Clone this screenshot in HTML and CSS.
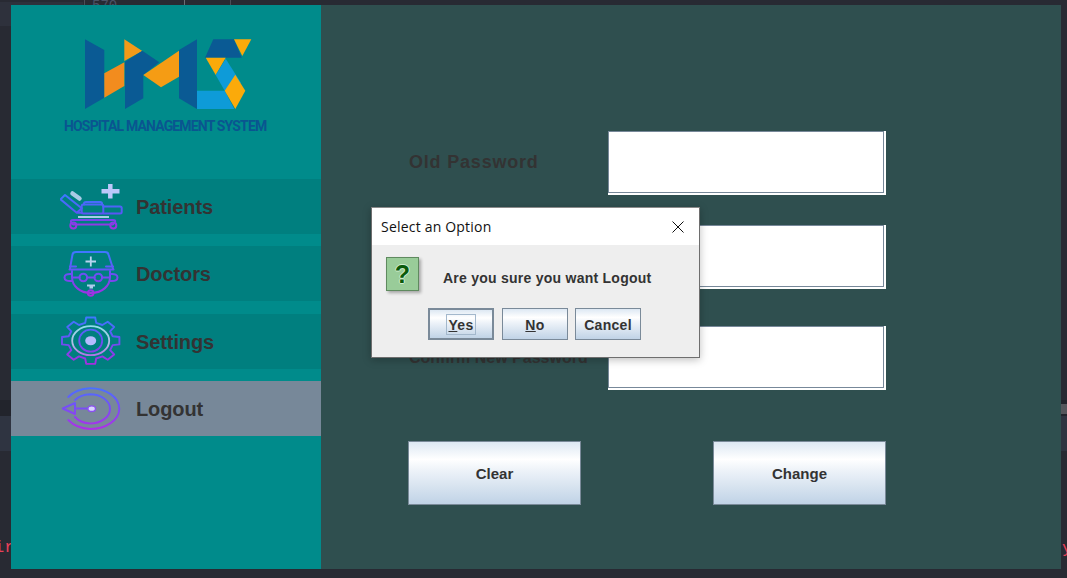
FILE: index.html
```html
<!DOCTYPE html>
<html lang="en">
<head>
<meta charset="utf-8">
<title>Hospital Management System</title>
<link rel="stylesheet" href="styles.css">
</head>
<body>
<div class="backdrop" aria-hidden="true">
  <div class="bd bd-tab"></div>
  <div class="bd bd-vline bd-v1"></div>
  <div class="bd bd-vline bd-v2"></div>
  <div class="bd bd-vline bd-v3"></div>
  <span class="bd bd-num">570</span>
  <div class="bd bd-dark"></div>
  <div class="bd bd-band"></div>
  <div class="bd bd-scroll"></div>
  <span class="bd bd-err bd-err-l">ir</span>
  <span class="bd bd-err bd-err-r">y</span>
</div>

<div class="window">
  <aside class="sidebar">
    <div class="brand">
      <svg class="logo" viewBox="85 39 167 70" width="167" height="70">
        <polygon fill="#0a5a94" points="85,39.3 104.3,50 104.3,97.7 85,109"/>
        <polygon fill="#f28c1e" points="104.3,73.3 124.3,62.3 124.3,86 104.3,97.7"/>
        <polygon fill="#f39a18" points="124.3,39.3 142.3,51 124.3,61"/>
        <polygon fill="#0a5a94" points="125,61.7 142.3,50.7 159.3,62.3 143.3,75 143.3,98.3 125,109"/>
        <polygon fill="#f59c14" points="143.3,75 179,50.7 179,76.7 161,87.3"/>
        <polygon fill="#0a5a94" points="179,50 197,39.3 197,109 179,98.3"/>
        <polygon fill="#0a5a94" points="213.3,39.3 234,39.3 241.7,57.7 205,57.7"/>
        <polygon fill="#fbaa0a" points="234,39.3 251.3,39.3 242.3,56"/>
        <polygon fill="#fbaa0a" points="205.7,57.7 225.7,57.7 215.7,75"/>
        <polygon fill="#0e9bd8" points="225.7,58.7 241,83 224.7,90.7 215.7,75"/>
        <polygon fill="#0e9bd8" points="197,90.7 224.7,90.7 234.3,109 197,109"/>
        <polygon fill="#fbaa0a" points="235.3,74.7 245.3,90.7 235.3,109 224.7,90.7"/>
      </svg>
      <div class="brand-name">HOSPITAL MANAGEMENT SYSTEM</div>
    </div>
    <nav class="nav">
      <div class="nav-item">
        <svg class="nav-icon" viewBox="60 179 76 55" width="76" height="55">
          <defs><linearGradient id="g1" gradientUnits="userSpaceOnUse" x1="0" y1="195" x2="0" y2="229"><stop offset="0" stop-color="#3d78ff"/><stop offset=".55" stop-color="#5a55f5"/><stop offset="1" stop-color="#a42ee0"/></linearGradient></defs>
          <g fill="none" stroke="url(#g1)" stroke-width="2" stroke-linejoin="round" stroke-linecap="round">
            <path d="M60.5 199.3 65 195 81.7 208.3 76.7 212.7H81.7M60.5 199.3 76.7 212.7"/>
            <rect x="81.7" y="204.5" width="21.6" height="9" rx="1.5"/>
            <path d="M84 204.5V203.5Q84 202 86 202H100Q102 202 102 203.5V204.5"/>
            <path d="M103.3 206.5H120Q121.7 206.5 121.7 208V212Q121.7 213.5 120 213.5H103.3"/>
            <path d="M73 220H113Q116 220 115 222L113 224.5H73L71 222Q70.500 220 73 220Z"/>
            <circle cx="73.300" cy="225.500" r="3"/>
            <circle cx="113.300" cy="225.500" r="3"/>
          </g>
          <path d="M78 217H109" stroke="#a9cbe9" stroke-width="2" fill="none"/>
          <path d="M110.300 184V198.500M101.500 191.300H119.500" stroke="#bcc8fa" stroke-width="4.500" fill="none"/>
          <path d="M72.500 193.500 79.500 198.500" stroke="#a8cbe6" stroke-width="4.500" stroke-linecap="round" fill="none"/>
        </svg>
        <span class="nav-label">Patients</span>
      </div>
      <div class="nav-item">
        <svg class="nav-icon" viewBox="60 246 76 55" width="76" height="55">
          <defs><linearGradient id="g2" gradientUnits="userSpaceOnUse" x1="0" y1="251" x2="0" y2="296"><stop offset="0" stop-color="#3d78ff"/><stop offset=".5" stop-color="#6a50f5"/><stop offset="1" stop-color="#a42ee0"/></linearGradient></defs>
          <g fill="none" stroke="url(#g2)" stroke-width="2" stroke-linecap="round" stroke-linejoin="round">
            <path d="M70 268.500 72.500 254.500Q73 252 76 252H105Q108 252 108.500 254.500L113 268.500"/>
            <path d="M70 266.500H76M106 266.500H113M69.500 269.500H113.500"/>
            <path d="M72 271V277C72 286 80 293 91 293S110 286 110 277V271"/>
            <path d="M71.500 274Q64.500 273.500 64.500 277.500T71.500 281"/>
            <path d="M110.500 274Q117.500 273.500 117.500 277.500T110.500 281"/>
            <circle cx="83.300" cy="277.500" r="3.800"/>
            <circle cx="98.300" cy="277.500" r="3.800"/>
            <path d="M87 277.500H94.500M79.500 277.500H73M102 277.500H109"/>
            <circle cx="90.700" cy="293" r="2.800"/>
          </g>
          <path d="M90.800 256.500V266.500M85.500 261.500H96" stroke="#b8d4f0" stroke-width="1.800" fill="none"/>
          <path d="M87 285.500H95M89.500 287.500H93" stroke="#aecdec" stroke-width="1.800" fill="none"/>
        </svg>
        <span class="nav-label">Doctors</span>
      </div>
      <div class="nav-item">
        <svg class="nav-icon" viewBox="60 314 76 55" width="76" height="55">
          <defs>
            <linearGradient id="g3" gradientUnits="userSpaceOnUse" x1="0" y1="-23" x2="0" y2="23"><stop offset="0" stop-color="#3d78ff"/><stop offset=".5" stop-color="#6a50f5"/><stop offset="1" stop-color="#a42ee0"/></linearGradient>
            <linearGradient id="g3b" gradientUnits="userSpaceOnUse" x1="0" y1="-15" x2="0" y2="15"><stop offset="0" stop-color="#8fdcec"/><stop offset=".6" stop-color="#b4bce8"/><stop offset="1" stop-color="#b070e8"/></linearGradient>
          </defs>
          <g transform="translate(90.700 340.700)" fill="none" stroke-linejoin="round">
            <polygon stroke="url(#g3)" stroke-width="1.900" points="28.700,3.700 22,4.400 19.400,9.400 23.500,13.800 17,19 11.700,15.700 5.500,17.800 4.500,23.200 -4.500,23.200 -5.500,17.800 -11.700,15.700 -17,19 -23.500,13.800 -19.400,9.400 -22,4.400 -28.700,3.700 -28.700,-3.700 -22,-4.400 -19.400,-9.400 -23.500,-13.800 -17,-19 -11.700,-15.700 -5.500,-17.800 -4.500,-23.200 4.500,-23.200 5.500,-17.800 11.700,-15.700 17,-19 23.500,-13.800 19.400,-9.400 22,-4.400 28.700,-3.700"/>
            <ellipse rx="18.500" ry="14.500" stroke="url(#g3b)" stroke-width="1.800"/>
            <ellipse rx="11.500" ry="11" stroke="url(#g3)" stroke-width="1.800"/>
            <ellipse rx="5.500" ry="4.500" fill="#b4bcff"/>
          </g>
        </svg>
        <span class="nav-label">Settings</span>
      </div>
      <div class="nav-item nav-item-active">
        <svg class="nav-icon" viewBox="60 381 76 55" width="76" height="55">
          <defs><linearGradient id="g4" gradientUnits="userSpaceOnUse" x1="0" y1="388" x2="0" y2="429"><stop offset="0" stop-color="#4a70ff"/><stop offset=".5" stop-color="#7a4cf5"/><stop offset="1" stop-color="#ae30e6"/></linearGradient></defs>
          <g fill="none" stroke="url(#g4)" stroke-width="2" stroke-linecap="round" stroke-linejoin="round">
            <path d="M68.300 397A29 20.500 0 0 1 90 388.300 29 20.500 0 0 1 119.300 408.700 29 20.500 0 0 1 90 429 29 20.500 0 0 1 68.300 420"/>
            <path d="M75 400A20 14.500 0 0 1 90 394.300 20 14.500 0 0 1 110 408.700 20 14.500 0 0 1 90 423.500 20 14.500 0 0 1 75 417"/>
            <path d="M62.700 408.500 75 403V414ZM75 408.500H88"/>
          </g>
          <ellipse cx="91.700" cy="408.700" rx="3.800" ry="2.800" fill="#d6d4ff" stroke="#8a50f0" stroke-width="1.400"/>
        </svg>
        <span class="nav-label">Logout</span>
      </div>
    </nav>
  </aside>

  <main class="main">
    <div class="form-row">
      <label class="field-label field-label-spaced">Old Password</label>
      <div class="field"><div class="field-inner"></div></div>
    </div>
    <div class="form-row">
      <label class="field-label field-label-spaced">New Password</label>
      <div class="field"><div class="field-inner"></div></div>
    </div>
    <div class="form-row form-row-wide">
      <label class="field-label">Confirm New Password</label>
      <div class="field"><div class="field-inner"></div></div>
    </div>
    <div class="actions">
      <button class="btn btn-large" type="button">Clear</button>
      <button class="btn btn-large" type="button">Change</button>
    </div>
  </main>
</div>

<div class="dialog">
  <div class="dialog-title">
    <span>Select an Option</span>
    <svg class="dialog-close" viewBox="0 0 12 12" width="12" height="12"><path d="M.5.500 11.500 11.500M11.500.500.500 11.500" stroke="#111" stroke-width="1" fill="none"/></svg>
  </div>
  <div class="dialog-body">
    <div class="dialog-message">
      <div class="q-icon">?</div>
      <p class="q-text">Are you sure you want Logout</p>
    </div>
    <div class="dialog-buttons">
      <button class="btn btn-small btn-focus" type="button"><span class="focus-ring"><u>Y</u>es</span></button>
      <button class="btn btn-small" type="button"><u>N</u>o</button>
      <button class="btn btn-small" type="button">Cancel</button>
    </div>
  </div>
</div>
</body>
</html>
```

FILE: styles.css
```css
* { box-sizing: border-box; }

html, body { margin: 0; height: 100%; }

body {
  position: relative;
  width: 1067px;
  height: 578px;
  overflow: hidden;
  padding: 5px 6px 9px 11px;
  background: #282a33;
  font-family: "Liberation Sans", Arial, sans-serif;
  color: #333;
}

/* desktop behind the window */
.bd { position: absolute; }
.bd-tab { left: 0; top: 2px; width: 83px; height: 24px; background: #2e313c; }
.bd-vline { top: 0; width: 1px; height: 6px; background: #4b4e58; }
.bd-v1 { left: 84px; }
.bd-v2 { left: 184px; background: #6a6d75; }
.bd-v3 { left: 230px; }
.bd-num { left: 92px; top: -1px; font: 14px/14px "Liberation Mono", monospace; color: #4c5266; }
.bd-dark { left: 0; top: 400px; width: 1067px; height: 16px; background: #22242c; }
.bd-band { left: 0; top: 416px; width: 1067px; height: 35px; background: #2f3441; }
.bd-scroll { left: 1061px; top: 404px; width: 6px; height: 10px; background: #55565c; }
.bd-err { font: 17px/20px "Liberation Mono", monospace; color: #e8405a; }
.bd-err-l { left: -6px; top: 538px; }
.bd-err-r { left: 1062px; top: 539px; }

/* application window */
.window {
  position: relative;
  display: flex;
  width: 1050px;
  height: 564px;
  background: #2f4f4f;
}

.sidebar { flex: none; width: 310px; background: #008b8b; }

.brand { height: 174px; padding: 34px 0 0 53px; }
.logo { display: block; margin-left: 21px; filter: blur(.35px); }
.brand-name {
  margin-top: 10px;
  font: 700 14px/15px Roboto, "Liberation Sans", sans-serif;
  letter-spacing: -.84px;
  white-space: nowrap;
  color: #0a5590;
}

.nav { display: flex; flex-direction: column; gap: 12px; }
.nav-item {
  display: flex;
  align-items: center;
  height: 55px;
  padding-left: 49px;
  background: #007f7f;
}
.nav-item:nth-child(3) { margin-top: 1px; }
.nav-item-active { background: #778899; }
.nav-icon { flex: none; display: block; }
.nav-label {
  padding-top: 2px;
  font-size: 20px;
  font-weight: 700;
  letter-spacing: -.1px;
  color: #333;
}

/* form */
.main { flex: 1; padding: 126px 0 0 87px; }
.form-row { display: flex; align-items: center; margin-bottom: 30px; }
.form-row-wide { margin-top: 37px; margin-bottom: 51px; }
.field-label {
  flex: none;
  width: 200px;
  padding-left: 1px;
  font-size: 16px;
  font-weight: 700;
  white-space: nowrap;
  color: #333;
}
.field-label-spaced { padding-bottom: 2px; font-size: 18px; letter-spacing: .8px; }
.field {
  flex: none;
  width: 278px;
  height: 64px;
  padding: 0 2px 2px 0;
  background: #fff;
}
.field-inner { height: 100%; border: 1px solid #778899; background: #fff; }

.actions { display: flex; justify-content: space-between; width: 478px; }

.btn {
  border: 1px solid #7a8a99;
  padding: 0;
  font-family: "Liberation Sans", Arial, sans-serif;
  font-weight: 700;
  color: #333;
  background: linear-gradient(#dde8f3 0, #fff 28%, #eef3f9 45%, #c0d3e6 100%);
}
.btn-large { width: 173px; height: 64px; font-size: 15px; }
.btn-small { width: 66px; height: 32px; padding-top: 2px; font-size: 14px; letter-spacing: .3px; }
.btn-focus { border: 2px solid #7a8a99; padding-top: 0; }
.focus-ring {
  display: block;
  width: 30px;
  height: 21px;
  margin: 0 auto;
  border: 1px solid #a3b8cc;
  line-height: 21px;
}

/* dialog */
.dialog {
  position: absolute;
  left: 371px;
  top: 207px;
  width: 329px;
  height: 151px;
  border: 1px solid #6e6e6e;
  border-top-color: #8a8a8a;
  background: #eee;
  box-shadow: 0 2px 8px rgba(0, 0, 0, .25);
}
.dialog-title {
  display: flex;
  align-items: center;
  justify-content: space-between;
  height: 37px;
  padding: 0 15px 0 9px;
  background: #fff;
  font: 14px/20px "Open Sans", "Noto Sans", sans-serif;
  letter-spacing: .2px;
  color: #111;
}
.dialog-close { display: block; }
.dialog-body { padding: 12px 0 0 14px; }
.dialog-message { display: flex; align-items: center; height: 34px; }
.q-icon {
  flex: none;
  width: 33px;
  height: 34px;
  border: 1px solid #5f8a5f;
  background: #9c9;
  box-shadow: 2px 2px 3px rgba(0, 0, 0, .3);
  font: 700 25px/32px "Liberation Sans", sans-serif;
  text-align: center;
  color: #0a5a0a;
  text-shadow: 1px 0 0 #cfeccf, -1px 0 0 #cfeccf, 0 1px 0 #cfeccf, 0 -1px 0 #cfeccf;
}
.q-text {
  margin: 8px 0 0 24px;
  font-size: 14px;
  font-weight: 700;
  letter-spacing: .25px;
  color: #333;
  white-space: nowrap;
}
.dialog-buttons { display: flex; margin: 17px 0 0 42px; gap: 8px; }
.dialog-buttons .btn:last-child { margin-left: -1px; }
```
